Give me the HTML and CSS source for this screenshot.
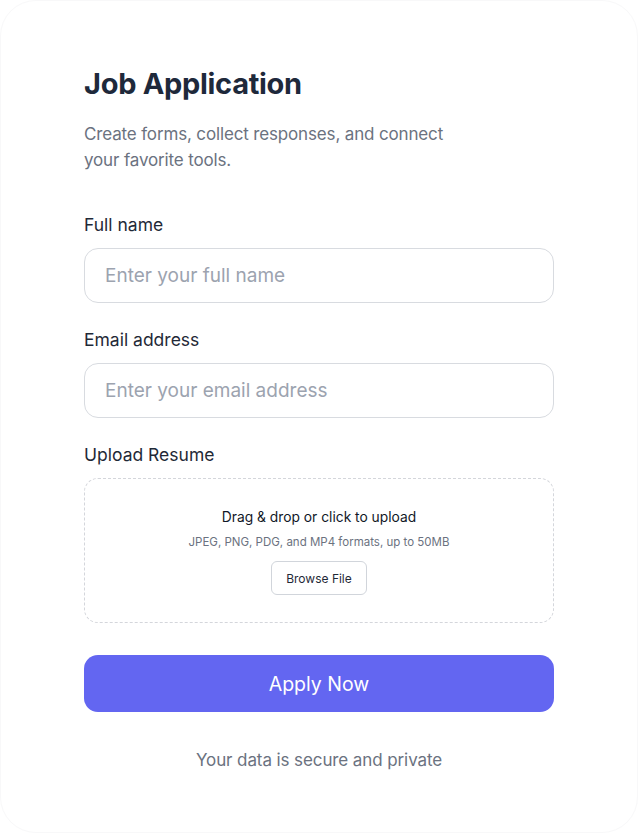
FILE: index.html
```html
<!DOCTYPE html>
<html lang="en">
<head>
<meta charset="utf-8">
<title>Job Application</title>
<link rel="stylesheet" href="styles.css">
</head>
<body>
<main class="card">
  <h1 class="title">Job Application</h1>
  <p class="subtitle">Create forms, collect responses, and connect<br>your favorite tools.</p>
  <form class="form">
    <div class="field">
      <label class="label" for="name">Full name</label>
      <input class="input" id="name" type="text" placeholder="Enter your full name">
    </div>
    <div class="field">
      <label class="label" for="email">Email address</label>
      <input class="input" id="email" type="email" placeholder="Enter your email address">
    </div>
    <div class="field">
      <span class="label">Upload Resume</span>
      <div class="dropzone">
        <p class="drop-title">Drag &amp; drop or click to upload</p>
        <p class="drop-hint">JPEG, PNG, PDG, and MP4 formats, up to 50MB</p>
        <button type="button" class="browse">Browse File</button>
      </div>
    </div>
    <button type="button" class="apply">Apply Now</button>
  </form>
  <p class="footer">Your data is secure and private</p>
</main>
</body>
</html>
```
FILE: styles.css
```css
* { box-sizing: border-box; }
html, body { margin: 0; padding: 0; background: #ffffff; }
body {
  font-family: Inter, "Noto Sans", "Liberation Sans", sans-serif;
  color: #1f2937;
}
.card {
  width: 638px;
  height: 833px;
  margin: 0;
  border: 1px solid #f8f8f9;
  border-radius: 36px;
  padding: 65px 83px 0 83px;
  display: flex;
  flex-direction: column;
}
.title {
  margin: 0;
  font-size: 29px;
  line-height: 36px;
  font-weight: 700;
  color: #1e293b;
  letter-spacing: -0.3px;
}
.subtitle {
  margin: 19px 0 0;
  font-size: 17px;
  line-height: 26px;
  color: #6b7280;
  letter-spacing: -0.15px;
}
.form {
  margin-top: 39px;
  display: flex;
  flex-direction: column;
  gap: 24px;
}
.field {
  display: flex;
  flex-direction: column;
  gap: 10px;
}
.label {
  font-size: 17.5px;
  line-height: 26px;
  font-weight: 400;
  color: #1f2937;
}
.input {
  height: 55px;
  width: 100%;
  border: 1.5px solid #d8dbe0;
  border-radius: 14px;
  padding: 0 20px;
  font-family: inherit;
  font-size: 19px;
  color: #1f2937;
  background: #fff;
  outline: none;
}
.input::placeholder { color: #9ca3af; }
.dropzone {
  height: 145px;
  border: 1.5px dashed #d4d6db;
  border-radius: 14px;
  padding-top: 27px;
  display: flex;
  flex-direction: column;
  align-items: center;
}
.drop-title {
  margin: 0;
  font-size: 13.8px;
  line-height: 22px;
  font-weight: 400;
  color: #111827;
}
.drop-hint {
  margin: 5px 0 0;
  font-size: 11.5px;
  line-height: 18px;
  color: #6b7280;
}
.browse {
  margin-top: 10px;
  width: 96px;
  height: 34px;
  border: 1px solid #d1d5db;
  border-radius: 6px;
  background: #fff;
  font-family: inherit;
  font-size: 12px;
  font-weight: 400;
  color: #1f2937;
}
.apply {
  margin-top: 8px;
  height: 57px;
  border: none;
  border-radius: 14px;
  background: #6366f1;
  color: #ffffff;
  font-family: inherit;
  font-size: 19.5px;
  font-weight: 400;
}
.footer {
  margin: 35px 0 0;
  text-align: center;
  font-size: 17px;
  line-height: 26px;
  color: #6b7280;
  letter-spacing: -0.1px;
}
```
